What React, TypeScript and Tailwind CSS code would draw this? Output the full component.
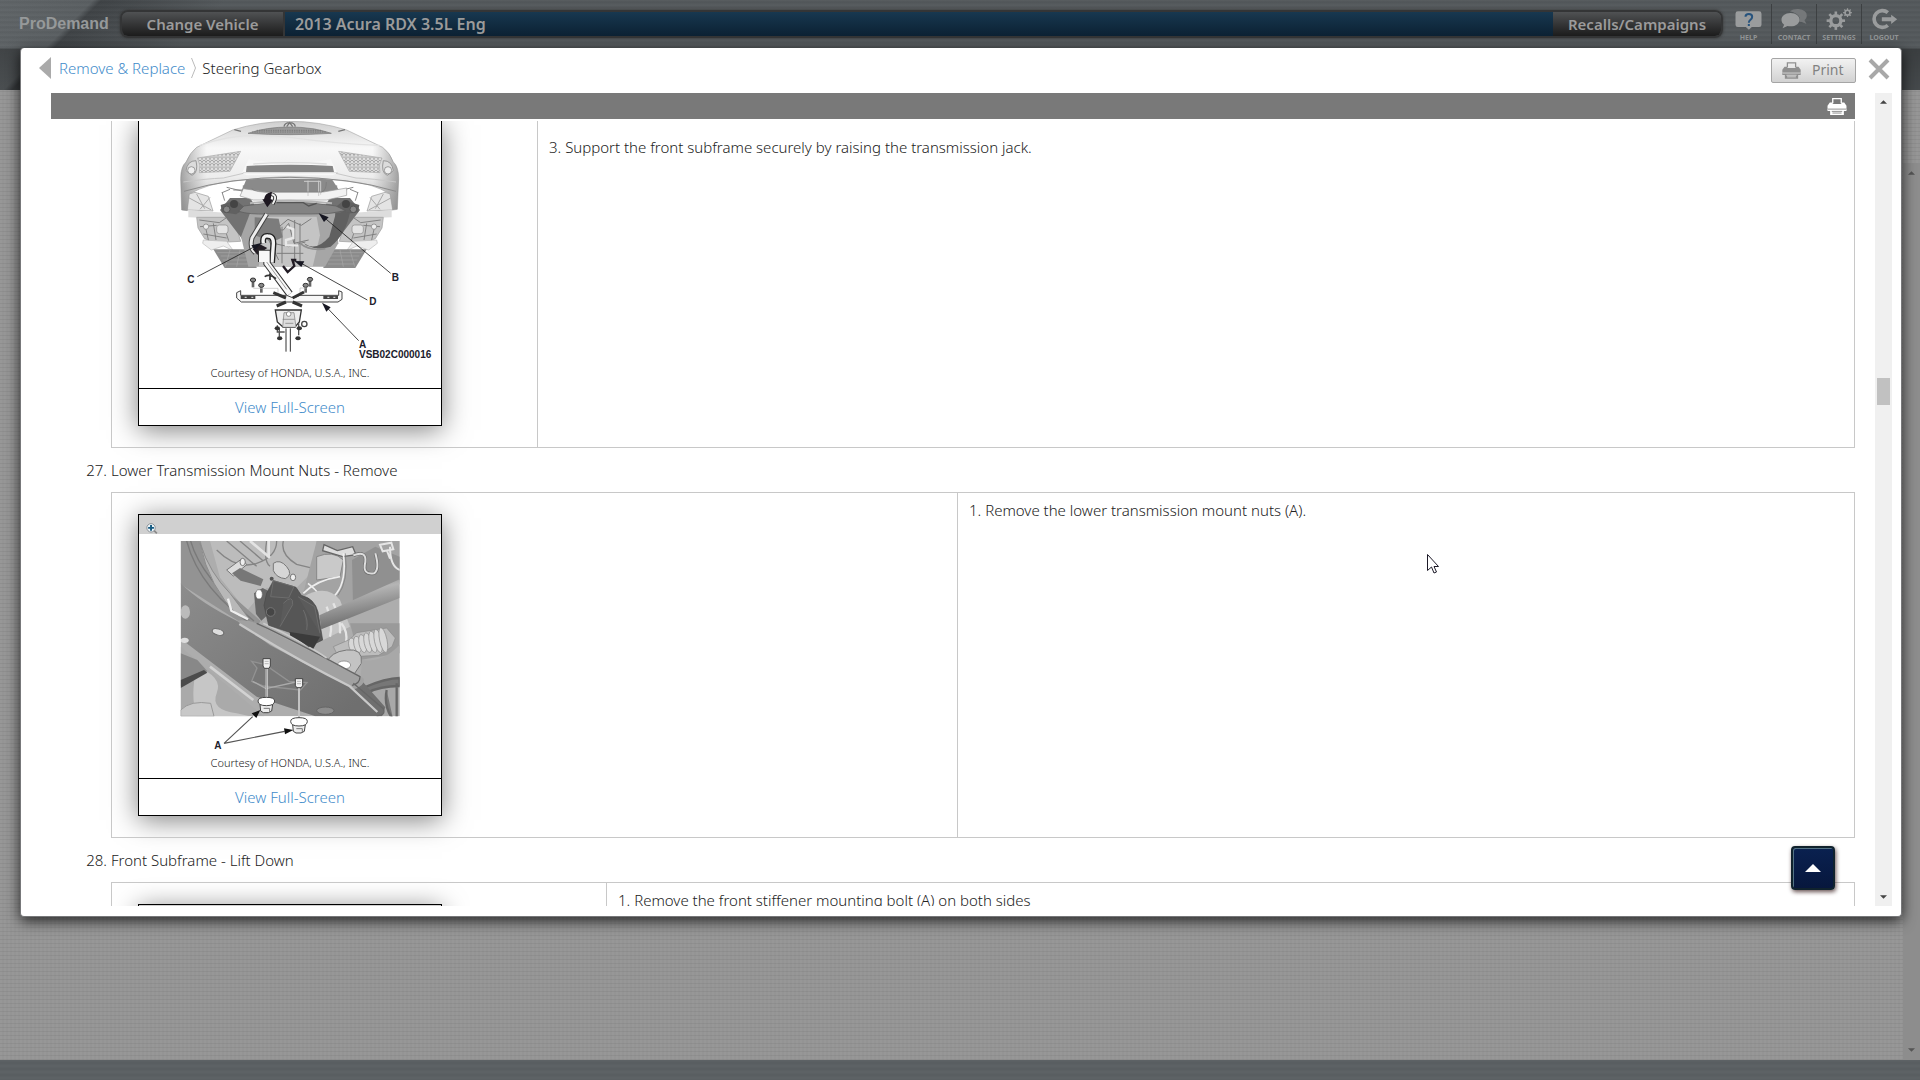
import type { ReactNode } from 'react'

function Printer({ className, gap }: { className: string; gap: string }) {
  return (
    <svg viewBox="0 0 60 52" className={className} aria-hidden="true">
      <path d="M17 16V2h26v14" fill="none" stroke="currentColor" strokeWidth="4" />
      <path d="M8 14h9v4h26v-4h9l7 10v12H1V24z" fill="currentColor" />
      <path d="M1 34h58v6h-8v12H9V40H1z" fill="currentColor" />
      <path d="M1 34h58" stroke={gap} strokeWidth="2.5" />
      <path d="M14 41h32M16 46h28" stroke={gap} strokeWidth="2.5" />
    </svg>
  )
}

function Gear({ cx, cy, r, teeth }: { cx: number; cy: number; r: number; teeth: number }) {
  return (
    <g transform={`translate(${cx} ${cy})`} fill="#9a9c9d">
      {Array.from({ length: teeth }, (_, i) => (
        <rect key={i} x={-r * 0.17} y={-r * 1.2} width={r * 0.34} height={r * 0.5} transform={`rotate(${(i * 360) / teeth})`} />
      ))}
      <circle r={r * 0.66} fill="none" stroke="#9a9c9d" strokeWidth={r * 0.44} />
    </g>
  )
}

function HelpIcon() {
  return (
    <svg viewBox="0 0 80 66" className="h-[22px] w-[27px]" aria-hidden="true">
      <path d="M8 10h64q7 0 7 7v33q0 7-7 7H50l-9 8-9-8H8q-7 0-7-7V17q0-7 7-7z" fill="#9a9c9d" />
      <path d="M31 26q0-8 10-8t10 8q0 5-5 9t-5 9M41 48v6" fill="none" stroke="#27537d" strokeWidth="6" />
    </svg>
  )
}
function ContactIcon() {
  return (
    <svg viewBox="0 0 80 66" className="h-[22px] w-[27px]" aria-hidden="true">
      <path d="M26 10q10-8 26-7 25 3 25 20 0 9-7 14l6 11-14-6q-4-1-8-1 6-14-8-23-9-6-20-8z" fill="#75787a" />
      <path d="M28 15C12 15 1 24 1 35c0 7 3 11 8 15L4 61l15-7q4 1 9 1c16 0 27-9 27-20S44 15 28 15z" fill="#9a9c9d" />
    </svg>
  )
}
function SettingsIcon() {
  return (
    <svg viewBox="0 0 80 66" className="h-[22px] w-[27px]" aria-hidden="true">
      <Gear cx={29} cy={38} r={23} teeth={8} />
      <Gear cx={64} cy={14} r={11} teeth={8} />
    </svg>
  )
}
function LogoutIcon() {
  return (
    <svg viewBox="0 0 80 66" className="h-[22px] w-[27px]" aria-hidden="true">
      <path d="M50 14A25 25 0 1 0 50 52" fill="none" stroke="#9a9c9d" strokeWidth="11" />
      <path d="M32 28h28V20l18 14-18 14v-8H32z" fill="#9a9c9d" />
    </svg>
  )
}

const tools = [
  { label: 'HELP', icon: <HelpIcon /> },
  { label: 'CONTACT', icon: <ContactIcon /> },
  { label: 'SETTINGS', icon: <SettingsIcon /> },
  { label: 'LOGOUT', icon: <LogoutIcon /> },
]

function TopBar() {
  return (
    <header className="flex h-[90px] items-start bg-[linear-gradient(180deg,transparent_48px,rgba(0,0,0,0.3)_49px,rgba(0,0,0,0.18)_100%),linear-gradient(135deg,#606568_0px,#5a5f62_66px,#3f4346_72px,#54595c_160px,#54595c_100%)]">
      <div className="flex h-12 w-full items-center bg-[repeating-linear-gradient(180deg,rgba(255,255,255,0.03)_0px,rgba(0,0,0,0.04)_2px,rgba(255,255,255,0.02)_5px)] pr-3.5 pl-[19px]">
        <div className="w-[101px] font-['Liberation_Sans'] text-base font-bold text-[#96999a]">ProDemand</div>
        <nav className="mb-px flex h-7 flex-1 overflow-hidden rounded-lg border-2 border-[#343536] font-semibold text-[#9b9b9b] shadow-[0_0_3px_#333]">
          <button className="w-[163px] border-r-2 border-[#343536] bg-linear-to-b from-[#505254] to-[#1c1c1c]">Change Vehicle</button>
          <div className="flex flex-1 items-center bg-linear-to-b from-[#183850] to-[#0c2133] pl-2.5 text-base">2013 Acura RDX 3.5L Eng</div>
          <button className="w-[168px] bg-linear-to-b from-[#505254] to-[#1c1c1c]">Recalls/Campaigns</button>
        </nav>
        <div className="ml-[3px] flex h-10 w-[180px]">
          {tools.map((t, i) => (
            <button key={t.label} className={`flex w-[45px] flex-col items-center justify-start gap-1 pt-1 text-[7px] leading-2 font-bold text-[#919495] ${i ? 'border-l border-[#3d4042]' : ''}`}>
              {t.icon}
              {t.label}
            </button>
          ))}
        </div>
      </div>
    </header>
  )
}

function Label({ x, y, children }: { x: number; y: number; children: string }) {
  return (
    <text x={x} y={y} fontFamily="Liberation Sans" fontWeight="700" fontSize="30" fill="#20202c">{children}</text>
  )
}

function SubframeDrawing() {
  const side = (
    <g>
      <path d="M262 300l-5-45 28-8 40 12 14 44z" fill="#e4e4e4" stroke="#999" strokeWidth="2" />
      <path d="M264 262l70 38M290 252l24 44M330 262l-30 36" stroke="#aaa" strokeWidth="3" />
      <path d="M265 300l110 8v18l-110-4z" fill="#ddd" />
      <path d="M290 322h110l22 72-76 4-32-12-20-32z" fill="#c4c4c4" stroke="#999" strokeWidth="2" />
      <path d="M298 330l60 8 20-14M300 350l50-4M318 358l8 36M340 340l8 50M372 350l14 42M310 372l70 12" stroke="#777" strokeWidth="2.5" fill="none" />
      <rect x="350" y="345" width="34" height="26" rx="8" fill="#e3e3e3" stroke="#888" strokeWidth="2" />
      <circle cx="318" cy="350" r="8" fill="#eee" stroke="#777" strokeWidth="2" />
      <path d="M308 400l26 20 36-12 30 14-20-28-70-4z" fill="#eee" stroke="#bbb" strokeWidth="2" />
      <path d="M340 418h120l10 56H374z" fill="#8b8b8b" />
      <path d="M352 428h88M362 438h88M368 450h88M376 462h80M390 420l-14 50M420 420l-10 50" stroke="#a8a8a8" strokeWidth="2" />
      <path d="M360 300l30-36h60l20 30-10 60-22 48-26-34z" fill="#727272" />
      <path d="M362 285l46-14 30 24-30 18-42-6z" fill="#616161" />
      <circle cx="402" cy="282" r="12" fill="#444" />
      <circle cx="380" cy="298" r="10" fill="#888" stroke="#555" strokeWidth="3" />
      <path d="M366 246l8 26M390 238l-24 10M400 240h30M430 226v32M380 232l50 12" stroke="#888" strokeWidth="3" />
    </g>
  )
  const bolt = (x: number, y: number) => (
    <g key={`${x}`}>
      <rect x={x - 4} y={y + 4} width="8" height="18" fill="#666" />
      <ellipse cx={x} cy={y} rx="8" ry="6" fill="#888" stroke="#333" strokeWidth="3" />
    </g>
  )
  return (
    <svg viewBox="117 33 906 729" className="block w-full" role="img" aria-label="Front subframe adapter and transmission jack">
      <defs>
        <linearGradient id="bumper" x1="0" y1="0" x2="0" y2="1">
          <stop offset="0" stopColor="#cfcfcf" />
          <stop offset=".3" stopColor="#f8f8f8" />
          <stop offset=".62" stopColor="#ededed" />
          <stop offset="1" stopColor="#b5b5b5" />
        </linearGradient>
        <linearGradient id="edge" x1="0" x2="1">
          <stop offset="0" stopColor="#777" stopOpacity=".65" />
          <stop offset=".12" stopColor="#999" stopOpacity="0" />
          <stop offset=".88" stopColor="#999" stopOpacity="0" />
          <stop offset="1" stopColor="#777" stopOpacity=".65" />
        </linearGradient>
        <pattern id="mesh" width="12" height="10" patternUnits="userSpaceOnUse">
          <rect width="12" height="10" fill="#dedede" />
          <path d="M0 0l6 5 6-5M6 5v5" stroke="#8a8a8a" strokeWidth="2" fill="none" />
        </pattern>
      </defs>
      {side}
      <g transform="translate(1140 0) scale(-1 1)">{side}</g>
      <path d="M440 206h255l24 38-60 14H470l-46-14z" fill="#8a8a8a" />
      <path d="M430 236l70 10h170l70-12v22l-60 14H460l-40-12z" fill="#f3f3f3" stroke="#999" strokeWidth="2" />
      <path d="M612 214h50v40M624 212v46M656 212v46" fill="none" stroke="#ccc" strokeWidth="3" />
      <path d="M455 236q10 12 60 10h150q14-4 14-30" fill="none" stroke="#777" strokeWidth="2" />
      <path d="M450 310h255l10 90-40 70H445l-22-90z" fill="#a6a6a6" />
      <path d="M500 320h150l10 56-22 94H476z" fill="#c4c4c4" />
      <path d="M510 328l30 20 24-20 40 18 30-20M500 360h50l16-20 16 60 44-10M520 400l46 10 50-14M530 430h80M546 350v110M584 330v130M600 340v120M506 390l30 60" stroke="#7d7d7d" strokeWidth="3" fill="none" />
      <path d="M560 350l20 8v26l-22 6v16h36" stroke="#e8e8e8" strokeWidth="7" fill="none" />
      <path d="M464 322l72 4 12 56-30 14-54-20z" fill="#7c7c7c" />
      <path d="M612 400q36 26 76-20l20-72 42-2q-12 66-58 104-40 12-74-4z" fill="#606060" />
      <path d="M600 400q30 24 76 16" stroke="#909090" strokeWidth="5" fill="none" />
      <path d="M432 288q140-24 276 0l28 14q-50 12-100 10H500q-50 2-84-8z" fill="#838383" stroke="#5a5a5a" strokeWidth="2" />
      <path d="M450 280q118-16 246 0" stroke="#b5b5b5" strokeWidth="6" fill="none" />
      <path d="M530 278h80l16 10 24-8" stroke="#555" strokeWidth="4" fill="none" />
      <path d="M245 300l-3-94q0-36 16-50 12-28 32-44l108-52Q480 34 569 34t171 26l108 52q22 16 32 44 16 14 16 50l-4 92-14 2-8-48q-56-34-126-38-120-14-175-14t-175 14q-68 6-126 38l-6 50z" fill="url(#bumper)" stroke="#aaa" strokeWidth="2" />
      <path d="M245 300l-3-94q0-36 16-50 12-28 32-44l108-52Q480 34 569 34t171 26l108 52q22 16 32 44 16 14 16 50l-4 92-14 2-8-48q-56-34-126-38-120-14-175-14t-175 14q-68 6-126 38l-6 50z" fill="url(#edge)" />
      <path d="M300 106Q420 62 569 82t270 24" fill="none" stroke="#e2e2e2" strokeWidth="4" />
      <path d="M444 70q55-19 125-19t125 19q-60 4-125 4t-125-4z" fill="#999" stroke="#777" strokeWidth="2" />
      <path d="M456 66h224M470 61h196" stroke="#6d6d6d" strokeWidth="2" strokeDasharray="4 3" />
      <path d="M552 50q2-12 17-12t17 12M560 50l9-12 9 12M423 64l-20-5M715 64l20-5" fill="none" stroke="#777" strokeWidth="4" />
      <path d="M446 148q123 24 246 0l20 42-15 6H440l-14-8z" fill="#f8f8f8" />
      <path d="M440 168q64-4 130-4t128 4l4 18H438z" fill="#858585" />
      <path d="M460 162q110-8 220 0M428 188h286" stroke="#ddd" strokeWidth="4" fill="none" />
      <path d="M292 144l130-20-32 60-92 4q6-24-6-44z" fill="url(#mesh)" stroke="#aaa" strokeWidth="2" />
      <path d="M846 144l-130-20 32 60 92 4q-6-24 6-44z" fill="url(#mesh)" stroke="#aaa" strokeWidth="2" />
      <path d="M258 182q4-30 30-30 8 36-12 44zM880 182q-4-30-30-30-8 36 12 44z" fill="#dcdcdc" stroke="#999" strokeWidth="3" />
      <circle cx="274" cy="181" r="11" fill="#eee" stroke="#777" strokeWidth="2" />
      <circle cx="864" cy="181" r="11" fill="#eee" stroke="#777" strokeWidth="2" />
      <path d="M250 216q70-10 120-12l60-14M888 216q-70-10-120-12l-60-14" fill="none" stroke="#c8c8c8" strokeWidth="3" />
      <path d="M252 244q140-42 318-42t318 42" fill="none" stroke="#8a8a8a" strokeWidth="3" />
      <path d="M500 312l-44 72q-8 30 10 44" stroke="#444" strokeWidth="15" fill="none" />
      <path d="M500 312l-44 72q-8 30 10 44" stroke="#eee" strokeWidth="9" fill="none" />
      <path d="M518 282q18-28-8-30" stroke="#222" strokeWidth="11" fill="none" />
      <path d="M518 282q18-28-8-30" stroke="#eee" strokeWidth="6" fill="none" />
      <path d="M492 268q2-20 24-22l-4 22 7 2-17 22-15-24z" fill="#1d1720" />
      <path d="M458 418l20-16 24 12-30 20z" fill="#241e25" />
      <path d="M490 400q-4-24 14-22 18 0 16 26l-4 54" stroke="#222" strokeWidth="18" fill="none" />
      <path d="M490 400q-4-24 14-22 18 0 16 26l-4 54" stroke="#f3f3f3" strokeWidth="10" fill="none" />
      <path d="M485 456v-26h16v30l68 92" stroke="#333" strokeWidth="22" fill="none" />
      <path d="M485 456v-26h16v30l68 92" stroke="#f8f8f8" strokeWidth="16" fill="none" />
      <path d="M500 456l60 82" stroke="#999" strokeWidth="3" />
      <path d="M494 500q16-10 34 6M510 490v20" stroke="#333" strokeWidth="5" fill="none" />
      <path d="M549 468l14 18 20-18-6-18h12" stroke="#221c25" strokeWidth="7" fill="none" />
      {bolt(459, 510)}{bolt(484, 526)}{bolt(617, 526)}{bolt(630, 508)}
      <path d="M460 535h74v20M600 552v-18h20" stroke="#bbb" strokeWidth="2" fill="none" />
      <path d="M410 548l12-6v14h138l20 8 20-8h116v-14l10 4v22l-12 8H424l-14-12z" fill="#f7f7f7" stroke="#444" strokeWidth="3" />
      <path d="M422 557h44v10h-44zM670 557h44v10h-44z" fill="#444" />
      <path d="M434 562h6M454 562h6M682 562h6M700 562h6" stroke="#ccc" strokeWidth="4" />
      <path d="M520 548l38 16M612 546l-34 18M530 588l28-12M606 588l-28-12" stroke="#333" strokeWidth="9" />
      <path d="M526 600h78l-6 36-14 16h-34l-18-16z" fill="#eee" stroke="#333" strokeWidth="4" />
      <path d="M552 608h30l6 44h-40zM548 628h36M556 640h24" fill="#ddd" stroke="#777" strokeWidth="2" />
      <circle cx="566" cy="612" r="7" fill="#fff" stroke="#666" strokeWidth="2" />
      <path d="M532 646v20h22M596 640v36M538 656v24" stroke="#555" strokeWidth="4" fill="none" />
      <ellipse cx="532" cy="655" rx="8" ry="6" fill="#333" /><ellipse cx="598" cy="655" rx="8" ry="6" fill="#333" />
      <ellipse cx="539" cy="685" rx="8" ry="6" fill="#333" /><ellipse cx="594" cy="685" rx="8" ry="6" fill="#333" />
      <circle cx="613" cy="642" r="8" fill="none" stroke="#444" strokeWidth="4" />
      <path d="M558 655v70M571 655v70" stroke="#333" strokeWidth="3" />
      <path d="M872 490L674 324M802 570L604 460M776 692L682 594M292 500l172-90" stroke="#222" strokeWidth="2.5" />
      <path d="M656 310l30 12-14 14zM583 453l30 1-9 17zM666 578l26 14-13 13zM486 398l-32 8 10 15z" fill="#171722" />
      <Label x={262} y={518}>C</Label>
      <Label x={875} y={512}>B</Label>
      <Label x={808} y={584}>D</Label>
      <Label x={777} y={714}>A</Label>
      <Label x={777} y={744}>VSB02C000016</Label>
    </svg>
  )
}

function MountDrawing() {
  const nut = (x: number, y: number) => (
    <g transform={`translate(${x} ${y})`} stroke="#444" strokeWidth="3">
      <path d="M-19 6h38l-3 20-10 5H-9l-8-5z" fill="#ececec" />
      <path d="M-25-4q0-11 25-11T25-4q0 14-25 14T-25-4z" fill="#fff" />
      <path d="M-8 18H10v12" fill="none" stroke="#777" />
    </g>
  )
  return (
    <svg viewBox="207 252 906 660" className="block w-full" role="img" aria-label="Lower transmission mount nuts">
      <defs>
        <clipPath id="frame"><rect x="332" y="273" width="657" height="526" /></clipPath>
        <linearGradient id="beam" x1="0" y1="0" x2="1" y2=".7">
          <stop offset="0" stopColor="#8c8c8c" /><stop offset="1" stopColor="#6f6f6f" />
        </linearGradient>
        <linearGradient id="rod" x1="0" y1="0" x2="0.3" y2="1">
          <stop offset="0" stopColor="#747474" /><stop offset=".35" stopColor="#b5b5b5" /><stop offset="1" stopColor="#666" />
        </linearGradient>
      </defs>
      <g clipPath="url(#frame)">
        <rect x="332" y="273" width="657" height="526" fill="#adadad" />
        <path d="M420 273h320l-10 90-60 60-80-10-60 70-80-100z" fill="#bcbcbc" />
        <path d="M440 300q60 60 120 40t60-67M470 273l90 76M510 273l70 60M590 273q-10 60 10 76M640 273q-10 40 40 70l40 10" stroke="#858585" strokeWidth="4" fill="none" />
        <path d="M540 273l60 50M596 273v50" stroke="#e3e3e3" strokeWidth="8" />
        <path d="M470 360l46-34 14 18-40 34z" fill="#ddd" stroke="#777" strokeWidth="3" />
        <path d="M486 370l24-16 70 34-8 20-60-16z" fill="#777" />
        <path d="M610 340q20-14 40 10t-4 36q-26-2-36-24z" fill="#d6d6d6" stroke="#777" strokeWidth="3" />
        <path d="M740 273h249v130l-230 90-60-60z" fill="#a3a3a3" />
        <path d="M846 330l70-40 73 30v70l-140 76z" fill="#909090" />
        <path d="M740 320q50-20 80 10l-10 50-70 10z" fill="#c9c9c9" stroke="#888" strokeWidth="3" />
        <path d="M762 284l40 18 46-12 10 24-40 6-60-18z" fill="#ddd" stroke="#666" strokeWidth="4" />
        <path d="M820 310q10 80-20 120t-80 60M714 400q40 30 70 90M700 430q40-40 110-50" stroke="#eee" strokeWidth="5" fill="none" />
        <path d="M826 310q10 84-22 126" stroke="#777" strokeWidth="2" fill="none" />
        <path d="M850 316q40-16 36 20-10 40 26 34 18-10 4-60" stroke="#6d6d6d" strokeWidth="10" fill="none" />
        <path d="M850 316q40-16 36 20-10 40 26 34 18-10 4-60" stroke="#ddd" strokeWidth="6" fill="none" />
        <path d="M930 284l34-6 6 20-32 6zM950 300l10 26M960 290q0 60 30 70" stroke="#e5e5e5" strokeWidth="6" fill="none" />
        <path d="M700 440q70-40 110 10l30 80-80 40-60-60z" fill="#c6c6c6" />
        <path d="M770 470q20 50 10 90M790 460q24 50 20 90M814 520q20 24 14 60" stroke="#e4e4e4" strokeWidth="7" fill="none" />
        <path d="M989 388L748 496l6 42 235-94z" fill="url(#rod)" />
        <path d="M840 520h149v90l-120 20z" fill="#9a9a9a" />
        <path d="M790 590l50-22 20-20 90-14 26 30-10 26-40 26-120 6z" fill="#bdbdbd" stroke="#888" strokeWidth="2" />
        {[846, 862, 878, 894, 910, 926, 942].map((x) => (
          <ellipse key={x} cx={x} cy={586 - (x - 846) / 6} rx="11" ry={22 + (x - 846) / 6} fill="#d8d8d8" stroke="#8a8a8a" strokeWidth="2" transform={`rotate(-12 ${x} 580)`} />
        ))}
        <path d="M770 640q10-34 60-40t44 40l-20 30q-50 6-84-30z" fill="#c3c3c3" stroke="#777" strokeWidth="3" />
        <ellipse cx="822" cy="645" rx="20" ry="12" fill="#fff" stroke="#777" strokeWidth="2" />
        <path d="M876 630q60 10 113-46v215h-60l-60-80z" fill="#a8a8a8" />
        <path d="M878 714q70-30 111-30v24q-60 0-96 20zM950 720q-10 50 20 90M980 700v110" stroke="#666" strokeWidth="7" fill="#777" />
        <path d="M332 273h60q20 90 90 160l90 80-20 30-220-140z" fill="#939393" />
        <path d="M362 273q30 110 190 240M350 273q40 150 210 260" stroke="#7a7a7a" strokeWidth="4" fill="none" />
        <path d="M390 280q30 90 90 150l60 80-34-10q-90-90-116-220z" fill="#b8b8b8" stroke="#8c8c8c" strokeWidth="3" />
        <path d="M474 446l10 36 50 26" stroke="#eee" strokeWidth="7" fill="none" />
        <path d="M332 590l250 209H332z" fill="#aaa" />
        <path d="M380 650q80 30 60 80t60 60l40 9H380q-20-60 0-149z" fill="#c6c6c6" />
        <path d="M420 650l130 100M440 640l120 90" stroke="#d2d2d2" strokeWidth="8" />
        <path d="M332 610l50 20 30 34-80 44z" fill="#888" />
        <path d="M332 690l70-30 10 8-80 46z" fill="#4b4b4b" />
        <path d="M332 780q30-30 90-20l10 39H332z" fill="#c8c8c8" stroke="#999" strokeWidth="3" />
        <path d="M332 400q60 60 168 112l56 10 310 160 80 90-10 27H736L560 740 332 566z" fill="url(#beam)" />
        <path d="M500 512q50-6 90 26l290 146q8 22-28 34L600 586z" fill="#a1a1a1" />
        <path d="M508 522q160 100 330 186l84 78" stroke="#c8c8c8" strokeWidth="7" fill="none" />
        <path d="M560 520q90 40 310 160 0 20-24 26M850 700l90 76q8 20-20 22" stroke="#666" strokeWidth="4" fill="none" />
        <path d="M580 520q120 56 190 104" stroke="#c9c9c9" strokeWidth="5" fill="none" />
        <path d="M545 634l40 10 72 50 54 4-20 22-110-12-36-14 16-40z" fill="#777" stroke="#929292" strokeWidth="4" />
        <path d="M548 694l40 22 90-20" stroke="#aaa" strokeWidth="4" fill="none" />
        <ellipse cx="444" cy="546" rx="18" ry="9" fill="#ddd" stroke="#666" strokeWidth="3" transform="rotate(16 444 546)" />
        <ellipse cx="346" cy="486" rx="14" ry="20" fill="#bbb" /><ellipse cx="344" cy="571" rx="12" ry="8" fill="#ddd" />
        <ellipse cx="766" cy="782" rx="26" ry="11" fill="#8c8c8c" stroke="#666" strokeWidth="3" />
        <path d="M552 430l26-16 28 14-6 60-26 24-16-20z" fill="#676767" />
        <path d="M590 430l20-38 68 20 16 24q40 10 50 50l14 84-42 20-60-44-60-20-14-60z" fill="#565656" stroke="#484848" strokeWidth="2" />
        <path d="M610 392l62 18-16 34-54-4zM640 460q30-30 28 4l-38 66M684 440l50 30 16 80M700 480q16 30 10 60" stroke="#6d6d6d" strokeWidth="3" fill="#5b5b5b" />
        <path d="M660 546l90 14-20 36-70-40z" fill="#3b3b3b" />
        <circle cx="602" cy="486" r="13" fill="#464646" stroke="#757575" strokeWidth="3" />
        <ellipse cx="567" cy="433" rx="10" ry="14" fill="#fff" stroke="#666" strokeWidth="2" />
        <ellipse cx="518" cy="336" rx="8" ry="11" fill="#eee" stroke="#777" strokeWidth="3" />
        <ellipse cx="669" cy="382" rx="8" ry="10" fill="#eee" stroke="#777" strokeWidth="3" />
        <circle cx="605" cy="386" r="6" fill="#555" />
      </g>
      <path d="M590 650v92M687 712v92" stroke="#eee" strokeWidth="6" />
      <path d="M590 650v92M687 712v92" stroke="#999" strokeWidth="3" />
      <path d="M579 626h22v22l-4 7h-14l-4-7zM676 686h22v20l-4 7h-14l-4-7z" fill="#f2f2f2" stroke="#444" strokeWidth="3" />
      <path d="M584 634h12M584 641h12M681 694h12M681 701h12" stroke="#999" strokeWidth="2" />
      {nut(589, 757)}
      {nut(687, 818)}
      <path d="M462 880l86-80M462 880l182-36" stroke="#555" strokeWidth="3.5" />
      <path d="M571 780l-26 10 14 14zM670 840l-28-5 3 18z" fill="#111" />
      <Label x={433} y={896}>A</Label>
    </svg>
  )
}

function ZoomIcon() {
  return (
    <svg viewBox="0 0 36 34" className="h-[11px] w-3" aria-hidden="true">
      <path d="M24 23l9 9" stroke="#888" strokeWidth="5" />
      <circle cx="15" cy="15" r="13" fill="#edf5fa" stroke="#8b9196" strokeWidth="3" />
      <path d="M15 6v18M6 15h18" stroke="#175b82" strokeWidth="6" />
    </svg>
  )
}

function Figure({ open, children }: { open?: boolean; children?: ReactNode }) {
  return (
    <figure className={`w-[304px] border border-black bg-white shadow-[0_4px_26px_rgba(0,0,0,0.5)] ${open ? 'border-t-0' : ''}`}>
      {!open && (
        <div className="flex h-[19px] items-end bg-[#d0d0d0] pl-[7px]">
          <button aria-label="Zoom image"><ZoomIcon /></button>
        </div>
      )}
      {children && (
        <>
          {children}
          <figcaption className="pb-1.5 text-center text-[11px] leading-[18px]">Courtesy of HONDA, U.S.A., INC.</figcaption>
          <a href="#full" className="block border-t border-black text-center leading-9 text-[#428bca]">View Full-Screen</a>
        </>
      )}
    </figure>
  )
}

function StepTable({ first, width, figure, children }: { first?: boolean; width: string; figure: ReactNode; children: ReactNode }) {
  return (
    <table className={`w-full table-fixed border-collapse border border-[#c8c8c8] ${first ? 'border-t-0' : ''}`}>
      <tbody>
        <tr>
          <td className={`${width} border-r border-[#c8c8c8] pb-[21px] pl-[26px] align-top ${first ? '' : 'pt-[21px]'}`}>{figure}</td>
          <td className={`px-[11px] align-top ${first ? 'pt-4' : 'pt-[7px]'}`}>{children}</td>
        </tr>
      </tbody>
    </table>
  )
}

function StepTitle({ n, children }: { n: number; children: string }) {
  return (
    <h2 className="flex h-11 items-center gap-1">
      <span className="w-14 text-right">{n}.</span>
      {children}
    </h2>
  )
}

function Arrow({ down, className }: { down?: boolean; className: string }) {
  return (
    <svg viewBox="0 0 8 4" className={className} aria-hidden="true">
      <path d={down ? 'M0 0h8L4 4z' : 'M0 4h8L4 0z'} fill="currentColor" />
    </svg>
  )
}

function Dialog() {
  return (
    <section className="absolute top-12 right-[18px] bottom-[163px] left-5 flex flex-col rounded-sm border border-t-0 border-[#77787a] bg-white pb-[10px] shadow-[0_4px_14px_rgba(0,0,0,0.75)]">
      <div className="flex h-[45px] items-center pr-[11px] pb-[5px] pl-[18px]">
        <button aria-label="Back">
          <svg viewBox="0 0 12 22" className="h-[22px] w-3"><path d="M12 0v22L0 11z" fill="#aaa" /></svg>
        </button>
        <a href="#remove" className="ml-2 text-[#428bca]">Remove &amp; Replace</a>
        <svg viewBox="0 0 5 20" className="mx-1.5 h-5 w-[5px]" aria-hidden="true"><path d="M.5 0l4 10-4 10" fill="none" stroke="#bbb" /></svg>
        <h1>Steering Gearbox</h1>
        <button className="mt-1 ml-auto flex h-[25px] w-[85px] items-center gap-[11px] rounded-xs border border-[#a5a5a5] bg-linear-to-b from-[#f2f2f2] to-[#d2d2d2] pl-2.5 text-sm font-normal text-[#828282]">
          <Printer className="h-[17px] w-[19px] text-[#8f8f8f]" gap="#e2e2e2" />
          Print
        </button>
        <button aria-label="Close" className="mt-0.5 ml-3">
          <svg viewBox="0 0 22 22" className="h-[22px] w-[22px]"><path d="M2 2l18 18M20 2L2 20" stroke="#a8a8a8" strokeWidth="4" /></svg>
        </button>
      </div>
      <div className="flex min-h-0 flex-1 pr-[9px] pl-[30px]">
        <div className="relative flex min-w-0 flex-1 flex-col">
          <div className="flex h-[26px] shrink-0 items-center justify-end bg-[#797979] pr-2">
            <button aria-label="Print article"><Printer className="h-[17px] w-5 text-white" gap="#797979" /></button>
          </div>
          <div className="mt-0.5 min-h-0 flex-1 overflow-hidden">
            <div className="pl-[60px]">
              <StepTable first width="w-[426px]" figure={<Figure open><SubframeDrawing /></Figure>}>
                3. Support the front subframe securely by raising the transmission jack.
              </StepTable>
            </div>
            <StepTitle n={27}>Lower Transmission Mount Nuts - Remove</StepTitle>
            <div className="pl-[60px]">
              <StepTable width="w-[846px]" figure={<Figure><MountDrawing /></Figure>}>
                1. Remove the lower transmission mount nuts (A).
              </StepTable>
            </div>
            <StepTitle n={28}>Front Subframe - Lift Down</StepTitle>
            <div className="pl-[60px]">
              <StepTable width="w-[495px]" figure={<Figure />}>
                1. Remove the front stiffener mounting bolt (A) on both sides
              </StepTable>
            </div>
          </div>
          <button aria-label="Back to top" className="absolute right-5 bottom-4 flex h-11 w-11 items-center justify-center rounded-sm border-2 border-[#10222d] bg-linear-to-b from-[#0a2150] to-[#07173d] text-white shadow-[inset_1px_1px_0_#527285,1px_2px_4px_rgba(40,10,10,0.7)]">
            <Arrow className="h-2 w-4" />
          </button>
        </div>
        <div className="ml-5 flex w-[17px] flex-col items-center bg-[#f0f0f0] py-[7px] text-[#444]">
          <Arrow className="h-1 w-[7px]" />
          <div className="mt-[274px] h-[27px] w-[13px] bg-[#c1c1c1]" />
          <Arrow down className="mt-auto h-1 w-[7px]" />
        </div>
      </div>
    </section>
  )
}

export default function App() {
  return (
    <main className="relative flex h-screen flex-col overflow-hidden bg-[#949494] font-['Noto_Sans',sans-serif] text-[15px] leading-5 font-light text-[#222]">
      <TopBar />
      <div className="flex flex-1 bg-[repeating-linear-gradient(0deg,rgba(0,0,0,0.05)_0px_1px,transparent_1px_4px),repeating-linear-gradient(90deg,rgba(255,255,255,0.03)_0px_2px,transparent_2px_4px)]">
        <div className="mt-[73px] ml-auto flex w-[17px] flex-col items-center justify-between bg-[#8d8d8d] py-2 text-[#555]">
          <Arrow className="h-1 w-[7px]" />
          <Arrow down className="h-1 w-[7px]" />
        </div>
      </div>
      <footer className="h-5 bg-[repeating-linear-gradient(180deg,#5e6366_0px,#585d60_3px,#5e6366_6px)]" />
      <Dialog />
      <svg viewBox="0 0 12 20" className="pointer-events-none absolute top-[554px] left-[1427px] h-5 w-3" aria-hidden="true">
        <path d="M.5 .5v16l4-3.500 2.500 6 2.500-1-2.500-5.500H11.500z" fill="#fff" stroke="#1d1a28" />
      </svg>
    </main>
  )
}
